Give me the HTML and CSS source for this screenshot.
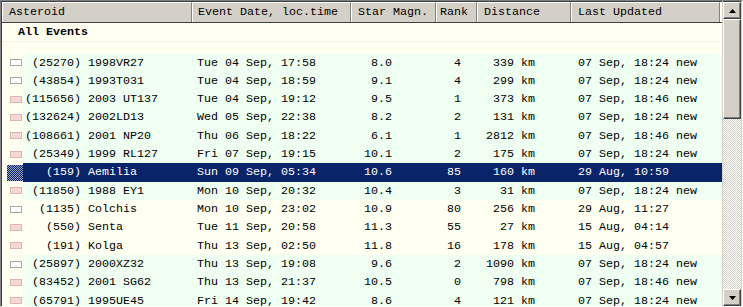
FILE: index.html
```html
<!DOCTYPE html>
<html lang="en">
<head>
    <meta charset="UTF-8">
    <title>Asteroid Events</title>
    <link rel="stylesheet" href="styles.css">
</head>
<body>
    <div class="grid-view">
        <div class="list">
            <div class="head">
                <div class="hc h-ast">Asteroid</div>
                <div class="hc h-date">Event Date, loc.time</div>
                <div class="hc h-mag">Star Magn.</div>
                <div class="hc h-rank">Rank</div>
                <div class="hc h-dist">Distance</div>
                <div class="hc h-upd">Last Updated</div>
            </div>
            <div class="group">All Events</div>
            <div class="spacer"></div>

            <div class="row green"><span class="ico"><i class="box white"></i></span><span class="ast"><span class="num">(25270)</span>1998VR27</span><span class="date">Tue 04 Sep, 17:58</span><span class="mag">8.0</span><span class="rank">4</span><span class="dist">339 km</span><span class="upd">07 Sep, 18:24 new</span></div>
            <div class="row green"><span class="ico"><i class="box white"></i></span><span class="ast"><span class="num">(43854)</span>1993T031</span><span class="date">Tue 04 Sep, 18:59</span><span class="mag">9.1</span><span class="rank">4</span><span class="dist">299 km</span><span class="upd">07 Sep, 18:24 new</span></div>
            <div class="row green"><span class="ico"><i class="box pink"></i></span><span class="ast"><span class="num">(115656)</span>2003 UT137</span><span class="date">Tue 04 Sep, 19:12</span><span class="mag">9.5</span><span class="rank">1</span><span class="dist">373 km</span><span class="upd">07 Sep, 18:46 new</span></div>
            <div class="row green"><span class="ico"><i class="box pink"></i></span><span class="ast"><span class="num">(132624)</span>2002LD13</span><span class="date">Wed 05 Sep, 22:38</span><span class="mag">8.2</span><span class="rank">2</span><span class="dist">131 km</span><span class="upd">07 Sep, 18:24 new</span></div>
            <div class="row green"><span class="ico"><i class="box pink"></i></span><span class="ast"><span class="num">(108661)</span>2001 NP20</span><span class="date">Thu 06 Sep, 18:22</span><span class="mag">6.1</span><span class="rank">1</span><span class="dist">2812 km</span><span class="upd">07 Sep, 18:46 new</span></div>
            <div class="row green"><span class="ico"><i class="box pink"></i></span><span class="ast"><span class="num">(25349)</span>1999 RL127</span><span class="date">Fri 07 Sep, 19:15</span><span class="mag">10.1</span><span class="rank">2</span><span class="dist">175 km</span><span class="upd">07 Sep, 18:24 new</span></div>
            <div class="row selected"><span class="ico"><i class="box checker"></i></span><span class="ast"><span class="num">(159)</span>Aemilia</span><span class="date">Sun 09 Sep, 05:34</span><span class="mag">10.6</span><span class="rank">85</span><span class="dist">160 km</span><span class="upd">29 Aug, 10:59</span></div>
            <div class="row green"><span class="ico"><i class="box pink"></i></span><span class="ast"><span class="num">(11850)</span>1988 EY1</span><span class="date">Mon 10 Sep, 20:32</span><span class="mag">10.4</span><span class="rank">3</span><span class="dist">31 km</span><span class="upd">07 Sep, 18:24 new</span></div>
            <div class="row"><span class="ico"><i class="box white"></i></span><span class="ast"><span class="num">(1135)</span>Colchis</span><span class="date">Mon 10 Sep, 23:02</span><span class="mag">10.9</span><span class="rank">80</span><span class="dist">256 km</span><span class="upd">29 Aug, 11:27</span></div>
            <div class="row"><span class="ico"><i class="box pink"></i></span><span class="ast"><span class="num">(550)</span>Senta</span><span class="date">Tue 11 Sep, 20:58</span><span class="mag">11.3</span><span class="rank">55</span><span class="dist">27 km</span><span class="upd">15 Aug, 04:14</span></div>
            <div class="row"><span class="ico"><i class="box pink"></i></span><span class="ast"><span class="num">(191)</span>Kolga</span><span class="date">Thu 13 Sep, 02:50</span><span class="mag">11.8</span><span class="rank">16</span><span class="dist">178 km</span><span class="upd">15 Aug, 04:57</span></div>
            <div class="row green"><span class="ico"><i class="box white"></i></span><span class="ast"><span class="num">(25897)</span>2000XZ32</span><span class="date">Thu 13 Sep, 19:08</span><span class="mag">9.6</span><span class="rank">2</span><span class="dist">1090 km</span><span class="upd">07 Sep, 18:24 new</span></div>
            <div class="row green"><span class="ico"><i class="box pink"></i></span><span class="ast"><span class="num">(83452)</span>2001 SG62</span><span class="date">Thu 13 Sep, 21:37</span><span class="mag">10.5</span><span class="rank">0</span><span class="dist">798 km</span><span class="upd">07 Sep, 18:46 new</span></div>
            <div class="row green"><span class="ico"><i class="box pink"></i></span><span class="ast"><span class="num">(65791)</span>1995UE45</span><span class="date">Fri 14 Sep, 19:42</span><span class="mag">8.6</span><span class="rank">4</span><span class="dist">121 km</span><span class="upd">07 Sep, 18:24 new</span></div>
        </div>

        <div class="scrollbar">
            <div class="sb-btn">
                <svg width="7" height="4" viewBox="0 0 7 4"><polygon points="3.5,0 7,4 0,4" fill="#000"/></svg>
            </div>
            <div class="sb-track">
                <div class="sb-thumb"></div>
            </div>
            <div class="sb-btn">
                <svg width="7" height="4" viewBox="0 0 7 4"><polygon points="0,0 7,0 3.5,4" fill="#000"/></svg>
            </div>
        </div>
    </div>
</body>
</html>
```

FILE: styles.css
```css
body {
    margin: 0;
    padding: 0;
    background-color: #d4d0c8;
    font-family: "Liberation Mono", "Courier New", monospace;
    font-size: 11.67px;
    color: #000;
}

.grid-view {
    display: flex;
    width: 743px;
    height: 307px;
    box-sizing: border-box;
    border-top: 1px solid #808080;
    border-left: 1px solid #808080;
    border-right: 1px solid #fff;
    border-bottom: 1px solid #fff;
    overflow: hidden;
}

.list {
    display: flex;
    flex-direction: column;
    width: 720px;
    height: 305px;
    border-top: 1px solid #404040;
    border-left: 1px solid #404040;
    background-color: #fffff2;
    overflow: hidden;
}

/* header */
.head {
    display: flex;
    flex: none;
    height: 20px;
    border-bottom: 1px solid #404040;
}

.hc {
    box-sizing: border-box;
    height: 20px;
    line-height: 19px;
    background-color: #d4d0c8;
    border-top: 1px solid #fff;
    border-left: 1px solid #fff;
    border-right: 1px solid #808080;
    white-space: nowrap;
    overflow: hidden;
}

.h-ast { width: 190px; padding-left: 6px; }
.h-date { width: 159px; padding-left: 5px; }
.h-mag { width: 85px; padding-left: 6px; }
.h-rank { width: 41px; padding-left: 3px; }
.h-dist { width: 94px; padding-left: 6px; }
.h-upd { width: 149px; padding-left: 6px; }

.group {
    flex: none;
    height: 18px;
    line-height: 19px;
    padding-left: 16px;
    font-weight: bold;
    border-bottom: 1px solid #f4f4ea;
}

.spacer {
    flex: none;
    height: 11.5px;
}

/* rows */
.row {
    display: grid;
    grid-template-columns: 21px 169px 159px 85px 41px 94px 151px;
    flex: none;
    height: 18.33px;
    line-height: 18px;
    white-space: nowrap;
}

.row > span {
    overflow: hidden;
}

.row.green > span { background-color: #effff2; }
.row.selected > span { background-color: #0a246a; color: #fff; }
.row > .ico,
.row.green > .ico,
.row.selected > .ico {
    background-color: #fffff2;
    display: flex;
    align-items: center;
}

.box {
    display: block;
    box-sizing: border-box;
    width: 12px;
    height: 7px;
    margin-left: 8px;
}

.box.white {
    background-color: #fff;
    border: 1px solid #a8a8a8;
}

.box.pink {
    background-color: #f6d8d8;
    border: 1px solid #dcb4b4;
}

.box.checker {
    width: 16px;
    height: 16px;
    margin-left: 5px;
    background: repeating-conic-gradient(#0a246a 0 25%, #98a0bc 0 50%) 0 0 / 2px 2px;
}

.num {
    display: inline-block;
    width: 58px;
    text-align: right;
    margin-right: 7px;
}

.date { padding-left: 5px; }
.mag { text-align: right; padding-right: 44px; }
.rank { text-align: right; padding-right: 16px; }
.dist { text-align: right; padding-right: 36px; }
.upd { padding-left: 7px; }

/* scrollbar */
.scrollbar {
    display: flex;
    flex-direction: column;
    width: 18px;
    height: 305px;
    margin-left: 1px;
    border-top: 1px solid #404040;
    box-sizing: border-box;
    background: repeating-conic-gradient(#d4d0c8 0 25%, #fff 0 50%) 0 0 / 2px 2px;
}

.sb-btn,
.sb-thumb {
    box-sizing: border-box;
    background-color: #d4d0c8;
    border-top: 1px solid #fff;
    border-left: 1px solid #fff;
    border-right: 1px solid #404040;
    border-bottom: 1px solid #404040;
    box-shadow: inset -1px -1px 0 #808080;
}

.sb-btn {
    flex: none;
    height: 17px;
    display: flex;
    align-items: center;
    justify-content: center;
}

.sb-track {
    flex: 1;
}

.sb-thumb {
    height: 100px;
}
```
